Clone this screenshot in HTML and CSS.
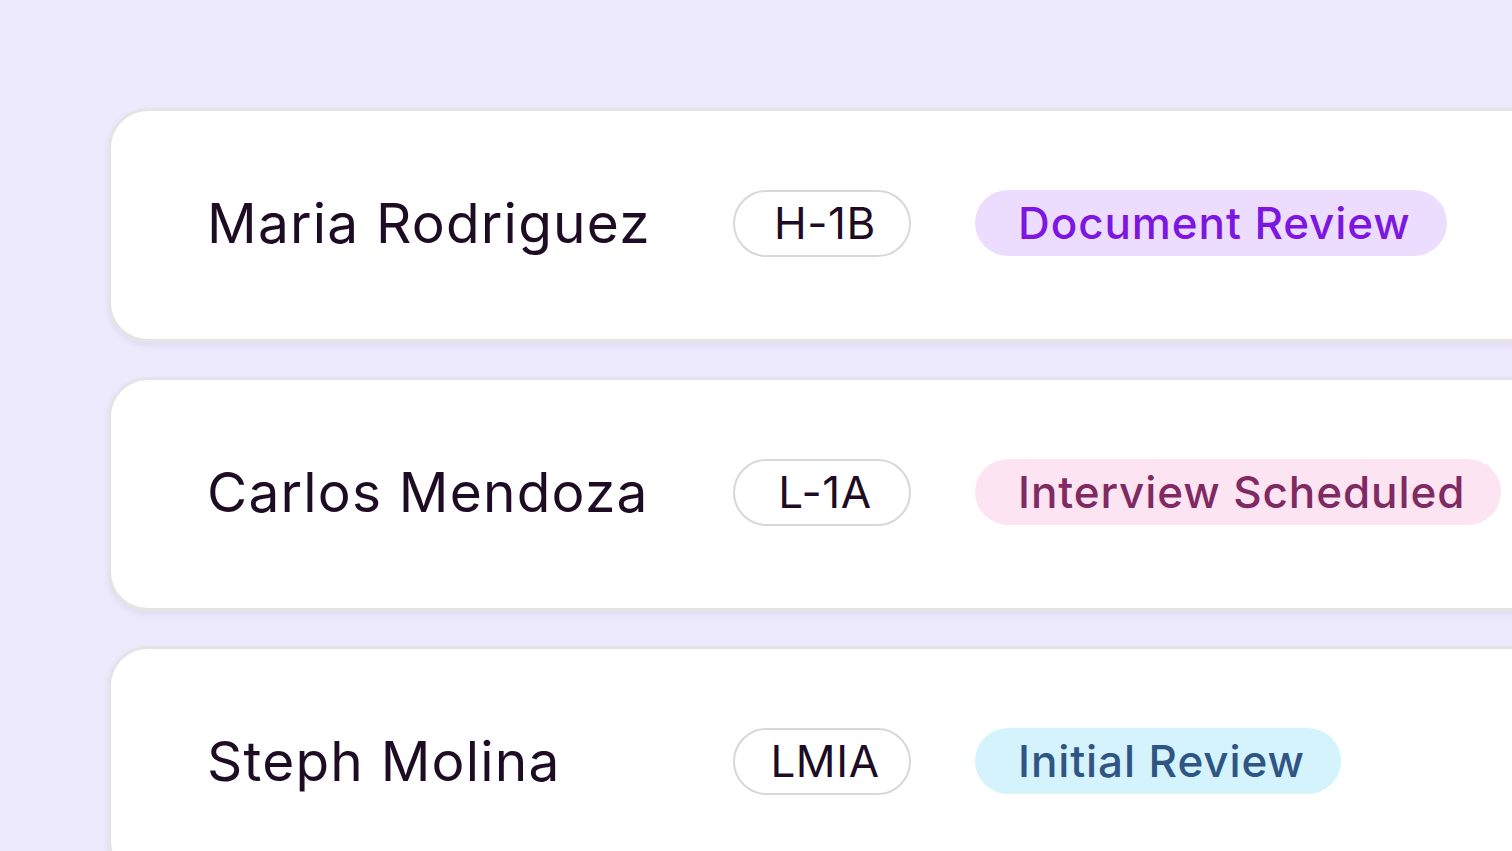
FILE: index.html
```html
<!DOCTYPE html>
<html lang="en">
<head>
<meta charset="utf-8">
<title>Applicants</title>
<link rel="stylesheet" href="styles.css">
</head>
<body>
<main class="list">
  <div class="card">
    <span class="name">Maria Rodriguez</span>
    <span class="visa">H-1B</span>
    <span class="status status-doc">Document Review</span>
  </div>
  <div class="card">
    <span class="name">Carlos Mendoza</span>
    <span class="visa">L-1A</span>
    <span class="status status-interview">Interview Scheduled</span>
  </div>
  <div class="card">
    <span class="name">Steph Molina</span>
    <span class="visa">LMIA</span>
    <span class="status status-initial">Initial Review</span>
  </div>
</main>
</body>
</html>
```
FILE: styles.css
```css
html, body {
  margin: 0;
  padding: 0;
  height: 100%;
  overflow: hidden;
  background: #eeeafd;
  font-family: "Inter", "Noto Sans", sans-serif;
}

.list {
  display: flex;
  flex-direction: column;
  gap: 34px;
  padding: 108px 0 0 108px;
}

.card {
  width: 1500px;
  height: 235px;
  box-sizing: border-box;
  background: #ffffff;
  border: 3px solid #e4e4e6;
  border-bottom-width: 4px;
  border-radius: 40px;
  box-shadow: 0 3px 6px rgba(60, 40, 120, 0.08);
  display: flex;
  align-items: center;
  padding: 0 0 4px 96px;
  flex-shrink: 0;
}

.name {
  width: 462px;
  margin-right: 64px;
  font-size: 55px;
  letter-spacing: 1.2px;
  color: #1e0b24;
}

.visa {
  width: 178px;
  height: 67px;
  box-sizing: border-box;
  border: 2px solid #d8d8da;
  border-radius: 34px;
  display: flex;
  align-items: center;
  justify-content: center;
  padding-left: 6px;
  font-size: 44px;
  letter-spacing: 0.6px;
  color: #1e0b24;
  margin-right: 64px;
}

.status {
  height: 66px;
  box-sizing: border-box;
  border-radius: 33px;
  display: flex;
  align-items: center;
  padding: 0 36px 0 43px;
  font-size: 44px;
  font-weight: 500;
  letter-spacing: 0.9px;
}

.status-doc {
  background: #ecdcfd;
  color: #7d16e1;
}

.status-interview {
  background: #fde4f3;
  color: #7f2a61;
}

.status-initial {
  background: #d4f3fd;
  color: #2e5583;
}
```
